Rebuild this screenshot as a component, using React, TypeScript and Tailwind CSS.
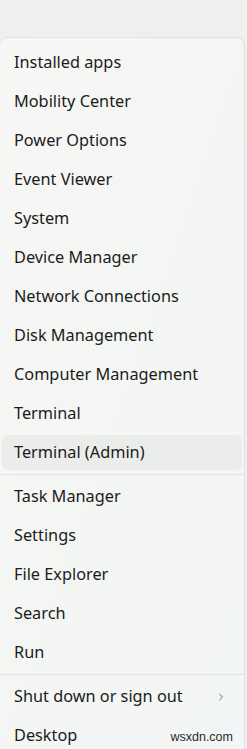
import { ChevronRight } from "lucide-react"

const groups = [
  [
    "Installed apps",
    "Mobility Center",
    "Power Options",
    "Event Viewer",
    "System",
    "Device Manager",
    "Network Connections",
    "Disk Management",
    "Computer Management",
    "Terminal",
    "Terminal (Admin)",
  ],
  ["Task Manager", "Settings", "File Explorer", "Search", "Run"],
]

type RowProps = { label: string; active?: boolean; sub?: boolean }

const Row = ({ label, active = false, sub = false }: RowProps) => (
  <div className="relative flex h-[39px] items-center gap-2 pr-[17px] pl-[14px]">
    {/* hover highlight sits behind the label */}
    {active && <div className="absolute inset-[2px] rounded-md bg-[#ebedeb]" />}
    <span className="relative flex-1 whitespace-nowrap">{label}</span>
    {sub && <ChevronRight className="relative h-[12px] w-[12px] text-[#555]" strokeWidth={1.6} />}
  </div>
)

const Separator = () => (
  <div className="h-[5px] pt-[2px]">
    <div className="h-px bg-[#e3e4e2]" />
  </div>
)

export default function App() {
  return (
    <div className="h-[749px] w-[247px] overflow-hidden bg-[#efefee] pt-[37px] font-['Noto_Sans',sans-serif] text-[16.3px] text-[#1b1b1b]">
      <div className="relative h-full w-[245px] rounded-t-lg border-t border-r border-[#e2e3e1] bg-gradient-to-br from-[#f7f7f5] via-[#f4f6f4] to-[#f3f6f6] pt-[5px]">
        {groups[0].map((l) => (
          <Row key={l} label={l} active={l === "Terminal (Admin)"} />
        ))}
        <Separator />
        {groups[1].map((l) => (
          <Row key={l} label={l} />
        ))}
        <Separator />
        <Row label="Shut down or sign out" sub />
        <Row label="Desktop" />
        <span className="absolute bottom-[2px] right-[11px] font-['Liberation_Sans',sans-serif] text-[12.5px] text-[#2a2a2a]">
          wsxdn.com
        </span>
      </div>
    </div>
  )
}
